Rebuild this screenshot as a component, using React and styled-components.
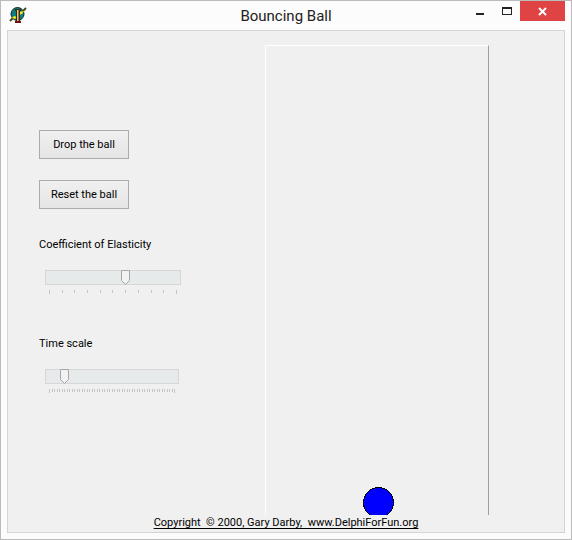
import React, { useState } from 'react';
import styled, { createGlobalStyle } from 'styled-components';

const colors = {
  frame: '#fcfcfc',
  frameEdge: '#bbbbbb',
  client: '#f0f0f0',
  clientEdge: '#d4d4d4',
  close: '#e04343',
  ink: '#222222',
  tick: '#c4c4c4',
};

const thumb = `url("data:image/svg+xml,%3Csvg xmlns='http://www.w3.org/2000/svg' width='9' height='15'%3E%3Cpath d='M.5 .5h8v10l-4 4-4-4z' fill='%23f2f2f2' stroke='%23a6a6a6'/%3E%3C/svg%3E")`;

const GlobalStyle = createGlobalStyle`
  * {
    box-sizing: border-box;
  }

  body {
    margin: 0;
    color: #000;
    font: 11px/16px Roboto, sans-serif;
  }
`;

const Window = styled.div`
  display: flex;
  flex-direction: column;
  min-height: 100vh;
  padding: 0 6px 6px;
  background: ${colors.frame};
  border: 1px solid ${colors.frameEdge};
`;

const TitleBar = styled.header`
  display: grid;
  grid-template-columns: 1fr auto 1fr;
  height: 29px;
`;

const AppIcon = styled.svg`
  width: 18px;
  height: 18px;
  margin: 5px 2px;
`;

const Title = styled.h1`
  margin: 0;
  color: ${colors.ink};
  font: 15px/30px Roboto, sans-serif;
`;

const WindowButtons = styled.div`
  display: flex;
  justify-content: flex-end;
`;

const WindowButton = styled.button`
  width: ${props => (props.$close ? '45px' : '27px')};
  height: 20px;
  padding: 0;
  border: 0;
  background: ${props => (props.$close ? colors.close : 'transparent')};

  svg {
    display: block;
    margin: 0 auto;
  }
`;

const Client = styled.main`
  display: flex;
  flex: 1;
  flex-direction: column;
  background: ${colors.client};
  border: 1px solid ${colors.clientEdge};
`;

const Workspace = styled.div`
  display: grid;
  flex: 1;
  grid-template-columns: 257fr 224fr 75fr;
  padding-top: 14px;
`;

const Controls = styled.div`
  display: flex;
  flex-direction: column;
  align-items: flex-start;
  padding: 85px 0 0 31px;
`;

const Button = styled.button`
  width: 90px;
  height: 29px;
  margin-bottom: 21px;
  padding: 1px 0 0;
  color: #000;
  font: inherit;
  background: linear-gradient(#f0f0f0, #e5e5e5);
  border: 1px solid #acacac;
`;

const Field = styled.div`
  display: flex;
  flex-direction: column;
  margin: 7px 0 35px;
`;

const TrackBar = styled.div`
  width: ${props => props.$width};
  margin: 17px 0 0 6px;
`;

const Range = styled.input`
  display: block;
  width: 100%;
  height: 15px;
  margin: 0;
  appearance: none;
  background: #e7eaea;
  box-shadow: inset 0 0 0 1px #d6d6d6;

  &::-webkit-slider-thumb {
    width: 9px;
    height: 15px;
    appearance: none;
    background: ${thumb};
  }
`;

const Ticks = styled.div`
  display: flex;
  justify-content: space-between;
  height: 4px;
  margin: 5px 4px 0;
`;

const Tick = styled.span`
  width: 1px;
  height: 3px;
  background: ${colors.tick};

  &:first-child,
  &:last-child {
    height: 4px;
  }
`;

const Stage = styled.section`
  position: relative;
  overflow: hidden;
  border: solid #fff;
  border-width: 1px 1px 0;
  border-right-color: #a0a0a0;
`;

const Ball = styled.svg`
  position: absolute;
  bottom: -3px;
  left: calc(50% - 14px);
  width: 31px;
  height: 31px;
`;

const Footer = styled.footer`
  height: 17px;
  line-height: 15px;
  text-align: center;
`;

const FooterLink = styled.a`
  color: #000;
  text-decoration-skip-ink: none;
  text-decoration-thickness: 1px;
  text-underline-offset: 2px;
  white-space: pre;
`;

const Slider = ({ id, label, width, max, initial }) => {
  const [value, setValue] = useState(initial);

  return (
    <Field>
      <label htmlFor={id}>{label}</label>
      <TrackBar $width={width}>
        <Range id={id} type="range" min="0" max={max} value={value} onChange={evt => setValue(evt.target.value)} />
        <Ticks>
          {[...Array(max + 1)].map((item, index) => <Tick key={index} />)}
        </Ticks>
      </TrackBar>
    </Field>
  );
};

const App = () => (
  <Window>
    <GlobalStyle />
    <TitleBar>
      <AppIcon viewBox="0 0 18 18" aria-hidden="true">
        <circle cx="8.5" cy="8" r="6.5" fill="#0b7f80" stroke="#0a2b2c" />
        <path d="M1 15l3-3M13 6l4-4" stroke="#4a4a18" strokeWidth="2" />
        <path d="M3 12l2-2 3 1-2 2z M10 6l5-1-2 3-3 1z" fill="#f0ec20" />
        <path d="M6 3h6v2H6z" fill="#4a2c10" />
        <path d="M7 5h4v10H7z" fill="#3b2410" />
        <path d="M8 4h1v11H8z" fill="#d8cc90" />
        <path d="M9 4h1v11H9z" fill="#a08040" />
        <path d="M6 15h6v2H6z" fill="#701010" />
      </AppIcon>
      <Title>Bouncing Ball</Title>
      <WindowButtons>
        <WindowButton aria-label="Minimize">
          <svg width="10" height="20"><path d="M1 12h8v2H1z" fill={colors.ink} /></svg>
        </WindowButton>
        <WindowButton aria-label="Maximize">
          <svg width="10" height="20"><path d="M0 6h10v8H0zM1 8v5h8V8z" fill={colors.ink} fillRule="evenodd" /></svg>
        </WindowButton>
        <WindowButton $close aria-label="Close">
          <svg width="9" height="20"><path d="M1 7l7 7M8 7l-7 7" stroke="#fff" strokeWidth="2" /></svg>
        </WindowButton>
      </WindowButtons>
    </TitleBar>
    <Client>
      <Workspace>
        <Controls>
          <Button>Drop the ball</Button>
          <Button>Reset the ball</Button>
          <Slider id="elasticity" label="Coefficient of Elasticity" width="136px" max={10} initial={6} />
          <Slider id="timescale" label="Time scale" width="134px" max={50} initial={6} />
        </Controls>
        <Stage>
          <Ball viewBox="0 0 31 31" shapeRendering="crispEdges">
            <circle cx="15.5" cy="15.5" r="15" fill="#0000ff" stroke="#000" />
          </Ball>
        </Stage>
      </Workspace>
      <Footer>
        <FooterLink href="http://www.delphiforfun.org">{'Copyright  © 2000, Gary Darby,  www.DelphiForFun.org'}</FooterLink>
      </Footer>
    </Client>
  </Window>
);

export default App;
